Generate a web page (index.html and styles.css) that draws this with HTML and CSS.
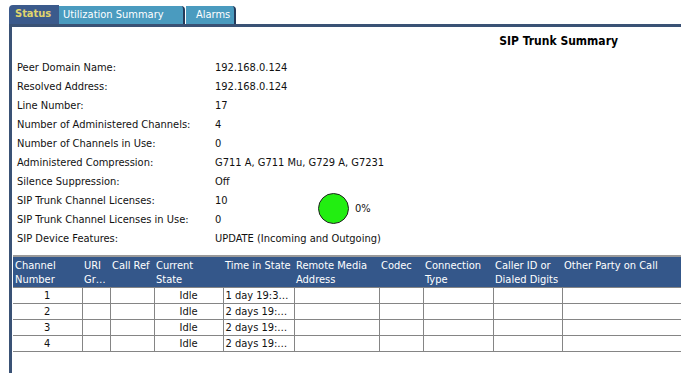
FILE: index.html
```html
<!DOCTYPE html>
<html>
<head>
<meta charset="utf-8">
<link rel="stylesheet" href="styles.css">
</head>
<body>
<div class="tabs">
  <div class="tab tab-active">Status</div>
  <div class="tab tab-util">Utilization Summary</div>
  <div class="tab tab-alarms">Alarms</div>
</div>
<div class="panel">
  <div class="title">SIP Trunk Summary</div>
  <div class="info">
    <div class="row"><span class="label">Peer Domain Name:</span><span class="value">192.168.0.124</span></div>
    <div class="row"><span class="label">Resolved Address:</span><span class="value">192.168.0.124</span></div>
    <div class="row"><span class="label">Line Number:</span><span class="value">17</span></div>
    <div class="row"><span class="label">Number of Administered Channels:</span><span class="value">4</span></div>
    <div class="row"><span class="label">Number of Channels in Use:</span><span class="value">0</span></div>
    <div class="row"><span class="label">Administered Compression:</span><span class="value">G711 A, G711 Mu, G729 A, G7231</span></div>
    <div class="row"><span class="label">Silence Suppression:</span><span class="value">Off</span></div>
    <div class="licenses">
      <div class="licenses-rows">
        <div class="row"><span class="label">SIP Trunk Channel Licenses:</span><span class="value">10</span></div>
        <div class="row"><span class="label">SIP Trunk Channel Licenses in Use:</span><span class="value">0</span></div>
      </div>
      <div class="gauge"><span class="dot"></span><span class="pct">0%</span></div>
    </div>
    <div class="row"><span class="label">SIP Device Features:</span><span class="value">UPDATE (Incoming and Outgoing)</span></div>
  </div>
  <table class="grid">
    <colgroup>
      <col class="c1"><col class="c2"><col class="c3"><col class="c4"><col class="c5">
      <col class="c6"><col class="c7"><col class="c8"><col class="c9"><col class="c10">
    </colgroup>
    <thead>
      <tr>
        <th>Channel<br>Number</th><th>URI<br>Gr…</th><th>Call Ref</th><th>Current<br>State</th><th>Time in State</th>
        <th>Remote Media<br>Address</th><th>Codec</th><th>Connection<br>Type</th><th>Caller ID or<br>Dialed Digits</th><th>Other Party on Call</th>
      </tr>
    </thead>
    <tbody>
      <tr><td class="ctr">1</td><td></td><td></td><td class="ctr">Idle</td><td>1 day 19:3…</td><td></td><td></td><td></td><td></td><td class="last"></td></tr>
      <tr><td class="ctr">2</td><td></td><td></td><td class="ctr">Idle</td><td>2 days 19:…</td><td></td><td></td><td></td><td></td><td class="last"></td></tr>
      <tr><td class="ctr">3</td><td></td><td></td><td class="ctr">Idle</td><td>2 days 19:…</td><td></td><td></td><td></td><td></td><td class="last"></td></tr>
      <tr><td class="ctr">4</td><td></td><td></td><td class="ctr">Idle</td><td>2 days 19:…</td><td></td><td></td><td></td><td></td><td class="last"></td></tr>
    </tbody>
  </table>
</div>
</body>
</html>
```
FILE: styles.css
```css
html, body {
  margin: 0;
  padding: 0;
  background: #ffffff;
  overflow: hidden;
  height: 373px;
}
body {
  font-family: "DejaVu Sans Condensed", "DejaVu Sans", sans-serif;
  font-size: 11px;
  color: #111;
}
.tabs {
  display: flex;
  align-items: flex-end;
  padding: 6px 0 0 9px;
  height: 18px;
}
.tab {
  height: 18px;
  line-height: 18px;
  box-sizing: border-box;
  color: #ffffff;
  font-size: 11px;
  background: #4a9bbf;
  border-right: 2px solid #253a5a;
  border-radius: 0 4px 0 0;
}
.tab-active {
  width: 50px;
  background: #3b5a8c;
  color: #e0d46c;
  font-weight: bold;
  padding-left: 6px;
  border-radius: 4px 0 0 0;
  border-right: none;
  height: 19px;
}
.tab-util {
  width: 126px;
  padding-left: 4px;
}
.tab-alarms {
  width: 50px;
  padding-left: 10px;
  margin-left: 1px;
}
.panel {
  margin-left: 9px;
  border-top: 3px solid #3a5275;
  border-left: 3px solid #3a5275;
  height: 346px;
}
.title {
  text-align: right;
  padding: 7px 63px 0 0;
  height: 17px;
  font-weight: bold;
  font-size: 12px;
  color: #000;
}
.info {
  padding: 7px 0 0 5px;
}
.row {
  display: flex;
  height: 19px;
  line-height: 19px;
  white-space: nowrap;
}
.label {
  width: 198px;
  flex: none;
}
.licenses {
  display: flex;
  align-items: center;
}
.licenses-rows {
  width: 301px;
}
.gauge {
  display: flex;
  align-items: center;
  gap: 6px;
  margin-top: -4px;
}
.dot {
  width: 29px;
  height: 29px;
  border-radius: 50%;
  background: #22ee11;
  border: 1px solid #222;
}
.pct {
  font-size: 11px;
}
.grid {
  margin: 7px 0 0 1px;
  border-collapse: collapse;
  table-layout: fixed;
  width: 700px;
  border-top: 2px solid #9a9a9a;
}
.grid col.c1 { width: 69px; }
.grid col.c2 { width: 28px; }
.grid col.c3 { width: 44px; }
.grid col.c4 { width: 69px; }
.grid col.c5 { width: 71px; }
.grid col.c6 { width: 85px; }
.grid col.c7 { width: 44px; }
.grid col.c8 { width: 70px; }
.grid col.c9 { width: 69px; }
.grid col.c10 { width: 151px; }
.grid th {
  background: #34578a;
  color: #ffffff;
  font-weight: normal;
  text-align: left;
  vertical-align: top;
  height: 31px;
  padding: 2px 2px 0 2px;
  line-height: 14px;
  box-sizing: border-box;
  white-space: nowrap;
  overflow: hidden;
}
.grid td {
  border: 1px solid #858585;
  height: 15px;
  padding: 0 2px;
  line-height: 15px;
  white-space: nowrap;
  overflow: hidden;
}
.grid tr td:first-child {
  border-left: none;
}
.grid td.ctr {
  text-align: center;
}
```
